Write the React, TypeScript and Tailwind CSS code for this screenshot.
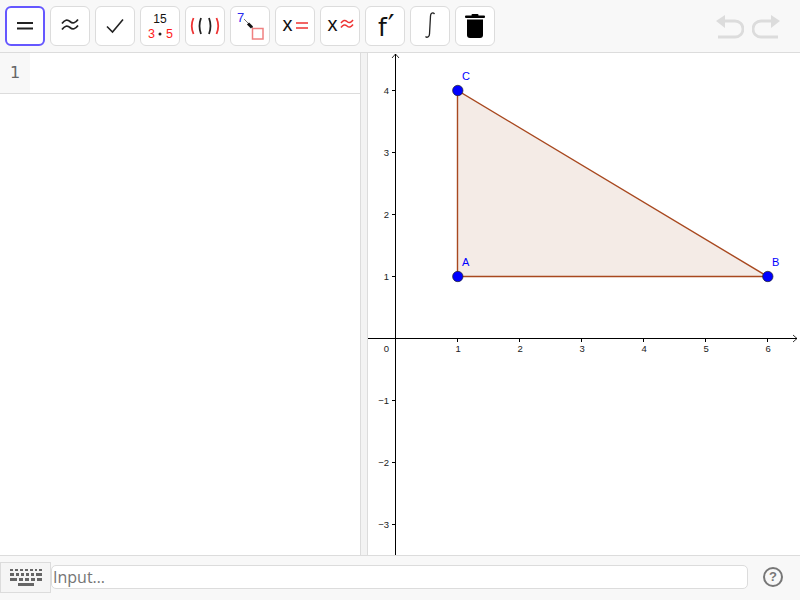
import React from "react";

const ToolButton = ({ active, children }: { active?: boolean; children: React.ReactNode }) => (
  <button
    className={`relative w-[40px] h-[40px] shrink-0 rounded-[6px] bg-white flex items-center justify-center ${
      active ? "border-2 border-[#6557ff]" : "border border-[#dcdcdc]"
    }`}
  >
    <svg
      width="40"
      height="40"
      viewBox="0 0 40 40"
      className={active ? "absolute -left-[2px] -top-[2px]" : "absolute -left-[1px] -top-[1px]"}
    >
      {children}
    </svg>
  </button>
);

const Approx = ({ x, y, w, gap, amp, color, sw }: { x: number; y: number; w: number; gap: number; amp: number; color: string; sw: number }) => {
  const d = (o: number) => `M${x} ${y + o + amp / 2}q${w / 4} ${-amp * 1.4} ${w / 2} ${-amp / 2}t${w / 2} ${-amp / 2}`;
  return (
    <g fill="none" stroke={color} strokeWidth={sw}>
      <path d={d(0)} />
      <path d={d(gap)} />
    </g>
  );
};

const SlotIcon = () => (
  <>
    <text x="7" y="16" fontSize="13" fill="#2a2aee">7</text>
    <path d="M14 13l11 11" stroke="#555" strokeWidth="0.8" />
    <path d="M18 17.500l4 4" stroke="#111" strokeWidth="3" />
    <rect x="22.500" y="22.500" width="10.500" height="10.500" fill="#fff" stroke="#f08080" strokeWidth="1.500" />
  </>
);

const tools: React.ReactNode[] = [
  <path key="eq" d="M12 17h16M12 22.500h16" stroke="#222" strokeWidth="1.8" />,
  <Approx key="ap" x={12} y={15.5} w={16} gap={6} amp={4} color="#222" sw={1.7} />,
  <path key="ok" d="M12 20.500l5.500 5.500 10.500-12.500" fill="none" stroke="#222" strokeWidth="1.6" />,
  <g key="frac">
    <text x="20" y="17" textAnchor="middle" fontSize="12" fill="#111">15</text>
    <text x="8" y="32" fontSize="12.500" fill="#ff1a1a">3</text>
    <circle cx="20" cy="28" r="1.500" fill="#222" />
    <text x="26" y="32" fontSize="12.500" fill="#ff1a1a">5</text>
  </g>,
  <g key="par" fill="none" strokeWidth="1.800">
    <path d="M8.500 12q-3.500 8 0 16" stroke="#ee3333" />
    <path d="M16 12q-3 8 0 16" stroke="#222" />
    <path d="M24 12q3 8 0 16" stroke="#222" />
    <path d="M31.500 12q3.500 8 0 16" stroke="#ee3333" />
  </g>,
  <SlotIcon key="slot" />,
  <g key="xeq">
    <text x="7.500" y="25" fontSize="20" fill="#111">x</text>
    <path d="M21 17h12M21 22h12" stroke="#ee3333" strokeWidth="1.600" />
  </g>,
  <g key="xap">
    <text x="7.500" y="25" fontSize="20" fill="#111">x</text>
    <Approx x={21} y={15.5} w={12} gap={4.5} amp={3} color="#ee3333" sw={1.5} />
  </g>,
  <text key="fp" x="13" y="30" fontSize="25" fill="#111" className="font-['DejaVu_Sans']">
    f<tspan fontSize="30" dx="1">′</tspan>
  </text>,
  <path key="int" d="M24.500 8c-1.500-2-4-1-4 2l-1 18c0 3-2.500 4-4 2.500" fill="none" stroke="#222" strokeWidth="1.3" />,
  <g key="del" fill="#000">
    <rect x="10" y="9.500" width="20" height="2.500" rx="1" />
    <rect x="16.500" y="8" width="7" height="2.500" rx="1" />
    <path d="M12 13.500h16v15.500q0 3-3 3h-10q-3 0-3-3z" />
  </g>,
];

const points: [number, number, string, number, number][] = [
  [1, 1, "A", 462, 266],
  [6, 1, "B", 772, 266],
  [1, 4, "C", 462, 80],
];

const Graph = () => {
  const ox = 395.5;
  const oy = 338.5;
  const u = 62;
  const gx = (v: number) => ox + v * u;
  const gy = (v: number) => oy - v * u;
  return (
    <svg width="432" height="502" viewBox="368 53 432 502" className="block">
      <polygon
        points={`${gx(1)},${gy(1)} ${gx(6)},${gy(1)} ${gx(1)},${gy(4)}`}
        fill="#f4ebe6"
        stroke="#a8481f"
        strokeWidth="1.400"
      />
      <path d={`M368 ${oy}H797`} stroke="#000" strokeWidth="1" />
      <path d="M793 335l4 3.500-4 3.500" fill="none" stroke="#000" strokeWidth="0.8" />
      <path d={`M${ox} 54V555`} stroke="#000" strokeWidth="1" />
      <path d={`M${ox - 3.5} 58l3.500-4 3.500 4`} fill="none" stroke="#000" strokeWidth="0.8" />
      {[1, 2, 3, 4, 5, 6].map((v) => (
        <g key={v}>
          <path d={`M${gx(v)} ${oy}v3.500`} stroke="#000" strokeWidth="1" />
          <text x={gx(v) + 0.7} y={352} textAnchor="middle" fontSize="9.500" fill="#222">{v}</text>
        </g>
      ))}
      {[4, 3, 2, 1, -1, -2, -3].map((v) => (
        <g key={v}>
          <path d={`M${ox - 3.5} ${gy(v)}h3.500`} stroke="#000" strokeWidth="1" />
          <text x={ox - 6.5} y={gy(v) + 3.5} textAnchor="end" fontSize="9.500" fill="#222">
            {v < 0 ? `\u2212${-v}` : v}
          </text>
        </g>
      ))}
      <text x={ox - 6.5} y={352} textAnchor="end" fontSize="9.500" fill="#222">0</text>
      {points.map(([x, y, name, lx, ly]) => (
        <g key={name}>
          <circle cx={gx(x) + 0.3} cy={gy(y)} r="5.200" fill="#0000ff" stroke="#222" strokeWidth="0.700" />
          <text x={lx} y={ly} fontSize="11" fill="#0000ff">{name}</text>
        </g>
      ))}
    </svg>
  );
};

const App = () => {
  return (
    <div className="w-[800px] h-[600px] flex flex-col overflow-hidden bg-white font-['Liberation_Sans',Arial,sans-serif]">
      {/* toolbar */}
      <div className="h-[53px] shrink-0 bg-[#f8f8f8] border-b border-[#dcdcdc] flex items-start pt-[6px] pl-[5px] pr-[20px]">
        <div className="flex gap-[5px]">
          {tools.map((t, i) => (
            <ToolButton key={i} active={i === 0}>{t}</ToolButton>
          ))}
        </div>
        <div className="ml-auto flex gap-[8px] mt-[9px]">
          <svg width="28" height="24" viewBox="0 0 28 24">
            <path d="M0 6l9-6v13z" fill="#dcdcdc" />
            <path d="M8 6h11a8 8 0 0 1 0 16H2" fill="none" stroke="#dcdcdc" strokeWidth="2.800" />
          </svg>
          <svg width="28" height="24" viewBox="0 0 28 24">
            <path d="M28 6l-9-6v13z" fill="#dcdcdc" />
            <path d="M20 6H9a8 8 0 0 0 0 16h17" fill="none" stroke="#dcdcdc" strokeWidth="2.800" />
          </svg>
        </div>
      </div>

      <div className="flex-1 flex min-h-0">
        {/* algebra view */}
        <div className="w-[360px] shrink-0">
          <div className="h-[41px] flex border-b border-[#dcdcdc]">
            <div className="w-[30px] bg-[#f8f8f8] flex items-center justify-center text-[16px] text-[#666] font-['DejaVu_Sans']">
              1
            </div>
          </div>
        </div>
        {/* splitter */}
        <div className="w-[8px] shrink-0 bg-[#f3f3f3] border-x border-[#dcdcdc]" />
        <Graph />
      </div>

      {/* input bar */}
      <div className="h-[45px] shrink-0 bg-[#f8f8f8] border-t border-[#dcdcdc] flex items-center pb-[2px]">
        <div className="w-[51px] h-[31px] shrink-0 bg-[#f5f5f5] border border-[#dcdcdc] flex items-center pl-[8px]">
          <svg width="34" height="20" viewBox="0 0 34 20" fill="#666">
            <path d="M1 2h3v2H1zM6 2h3v2H6zM11 2h3v2H11zM16 2h3v2H16zM21 2h3v2H21zM26 2h2v2H26zM30 2h3v2H30z" />
            <path d="M1 6h4v3H1zM7 6h3v3H7zM12 6h3v3H12zM17 6h3v3H17zM22 6h3v3H22zM27 6h6v3H27z" />
            <path d="M1 11h7v3H1zM10 11h4v3H10zM16 11h4v3H16zM22 11h4v3H22zM28 11h5v3H28z" />
            <path d="M9 16h16v3H9z" />
          </svg>
        </div>
        <div className="w-[697px] h-[24px] bg-white border border-[#dcdcdc] rounded-[5px] flex items-center pl-[1px] text-[16px] text-[#757575] font-['Open_Sans']">
          Input…
        </div>
        <div className="ml-[15px] w-[20px] h-[20px] rounded-full border-2 border-[#777] flex items-center justify-center text-[13px] font-bold text-[#777]">
          ?
        </div>
      </div>
    </div>
  );
};

export default App;
